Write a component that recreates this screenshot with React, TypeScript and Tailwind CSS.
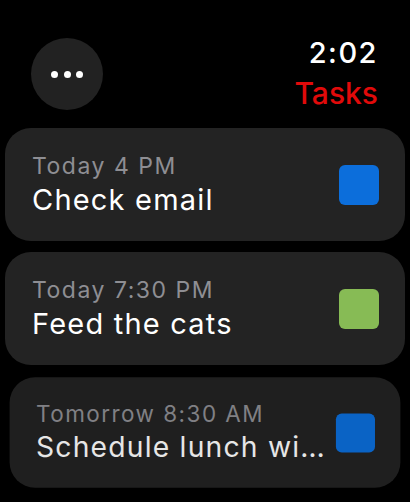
const font = { fontFamily: "Inter, 'Noto Sans', sans-serif" };

type Task = {
  when: string;
  title: string;
  color: string;
  dim?: boolean;
};

const tasks: Task[] = [
  { when: "Today 4 PM", title: "Check email", color: "bg-[#0c6edb]" },
  { when: "Today 7:30 PM", title: "Feed the cats", color: "bg-[#87bb55]" },
  {
    when: "Tomorrow 8:30 AM",
    title: "Schedule lunch with Sam",
    color: "bg-[#0c6edb]",
    dim: true,
  },
];

function TaskCard({ task }: { task: Task }) {
  return (
    <div
      className={
        task.dim
          ? "flex items-center rounded-[26px] bg-[#232323] py-[23px] pl-[27px] pr-[26px] opacity-90 scale-[0.977]"
          : "flex items-center rounded-[26px] bg-[#232323] py-[23px] pl-[27px] pr-[26px]"
      }
    >
      <div className="min-w-0 flex-1 pr-[4px]">
        <p className="truncate text-[23px] leading-[30px] tracking-[1.5px] text-[#8e8e93]">
          {task.when}
        </p>
        <p className="truncate text-[29px] leading-[37px] tracking-[1.2px] text-white">
          {task.title}
        </p>
      </div>
      <div className={`h-10 w-10 shrink-0 rounded-[6px] ${task.color}`} />
    </div>
  );
}

export default function App() {
  return (
    <div
      className="h-[502px] w-[410px] overflow-hidden bg-black"
      style={font}
    >
      <header className="flex items-start justify-between pl-[31px] pr-[32px] pt-[32px]">
        <button className="mt-[6px] flex h-[72px] w-[72px] items-center justify-center gap-[5.5px] rounded-full bg-[#222222]">
          <span className="h-[7px] w-[7px] rounded-full bg-white" />
          <span className="h-[7px] w-[7px] rounded-full bg-white" />
          <span className="h-[7px] w-[7px] rounded-full bg-white" />
        </button>
        <div className="text-right">
          <p className="text-[29px] font-medium leading-[41px] tracking-[1.5px] text-white">2:02</p>
          <p className="text-[30px] font-medium leading-[41px] text-[#e10a0a]">Tasks</p>
        </div>
      </header>

      <div className="mt-[14px] flex flex-col gap-[11px] px-[5px]">
        {tasks.map((t) => (
          <TaskCard key={t.title} task={t} />
        ))}
      </div>
    </div>
  );
}
